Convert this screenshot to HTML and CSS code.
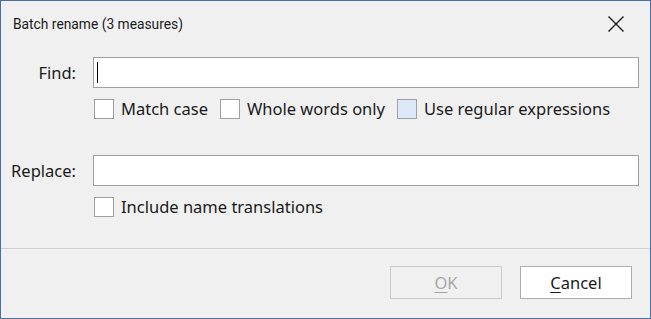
FILE: index.html
```html
<!DOCTYPE html>
<html lang="en">
<head>
    <meta charset="UTF-8">
    <title>Batch rename</title>
    <link rel="stylesheet" href="styles.css">
</head>
<body>
    <div class="dialog">
        <div class="titlebar">
            <span class="title">Batch rename (3 measures)</span>
            <svg class="close" width="18" height="18" viewBox="0 0 18 18">
                <path d="M1.5 1.5 L16.5 16.5 M16.5 1.5 L1.5 16.5" stroke="#1a1a1a" stroke-width="1.4" fill="none"/>
            </svg>
        </div>
        <div class="form">
            <div class="row">
                <label class="label">Find:</label>
                <div class="field"><span class="caret"></span></div>
            </div>
            <div class="options">
                <span class="check"><span class="box"></span>Match case</span>
                <span class="check"><span class="box"></span>Whole words only</span>
                <span class="check"><span class="box hot"></span>Use regular expressions</span>
            </div>
            <div class="row replace">
                <label class="label">Replace:</label>
                <div class="field"></div>
            </div>
            <div class="options">
                <span class="check"><span class="box"></span>Include name translations</span>
            </div>
        </div>
        <div class="footer">
            <button class="btn" disabled><u>O</u>K</button>
            <button class="btn"><u>C</u>ancel</button>
        </div>
    </div>
</body>
</html>
```

FILE: styles.css
```css
body {
    margin: 0;
    padding: 0;
    font-family: "Noto Sans", "Open Sans", sans-serif;
    font-size: 16.5px;
    color: #1a1a1a;
    background-color: #f0f0f0;
}
.dialog {
    width: 651px;
    height: 319px;
    box-sizing: border-box;
    border: 1px solid #4a6ea8;
    background-color: #f0f0f0;
    display: flex;
    flex-direction: column;
}
.titlebar {
    height: 46px;
    display: flex;
    align-items: center;
    justify-content: space-between;
    padding: 0 25px 0 12px;
}
.title {
    font-family: Roboto, "Noto Sans", sans-serif;
    font-size: 13.8px;
}
.form {
    padding: 10px 11px 0 0;
    flex: 1;
}
.row {
    display: flex;
    align-items: center;
}
.replace {
    margin-top: 36px;
}
.label {
    width: 75px;
    padding-right: 17px;
    text-align: right;
}
.field {
    flex: 1;
    height: 31px;
    box-sizing: border-box;
    border: 1px solid #a0a0a0;
    background-color: #fff;
    display: flex;
    align-items: center;
}
.caret {
    display: inline-block;
    width: 1px;
    height: 21px;
    margin-left: 3px;
    background-color: #000;
}
.options {
    display: flex;
    margin: 11px 0 0 93px;
    gap: 12px;
    line-height: 20px;
}
.check {
    display: flex;
    align-items: center;
}
.box {
    width: 20px;
    height: 20px;
    box-sizing: border-box;
    border: 1px solid #a0a0a0;
    background-color: #fff;
    margin-right: 7px;
}
.box.hot {
    background-color: #dce7f7;
}
.footer {
    border-top: 1px solid #d0d0d0;
    height: 70px;
    box-sizing: border-box;
    display: flex;
    justify-content: flex-end;
    gap: 18px;
    padding: 17px 18px 0 0;
}
.btn {
    width: 112px;
    height: 33px;
    font-family: inherit;
    font-size: 16.5px;
    color: #1a1a1a;
    background-color: #fff;
    border: 1px solid #adadad;
    padding: 0;
}
.btn u {
    text-underline-offset: 3px;
}
.btn:disabled {
    color: #a6a6a6;
    background-color: #f0f0f0;
    border-color: #cccccc;
}
```
